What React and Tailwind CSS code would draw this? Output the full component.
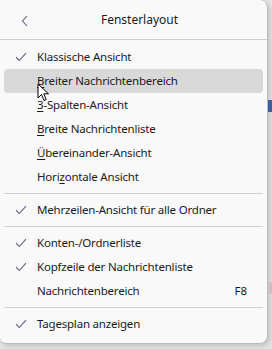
import React from "react";

const Check = () => (
  <svg width="12" height="10" viewBox="0 0 12 10" className="shrink-0">
    <path d="M1 5.2 L4.2 8.5 L11 1.2" fill="none" stroke="#5f5d86" strokeWidth="1.1" />
  </svg>
);

const Item = ({ checked, label, u, shortcut, active }) => {
  // u = index of the underlined access-key letter
  let text = label;
  if (u !== undefined) {
    text = (
      <>
        {label.slice(0, u)}
        <span className="underline underline-offset-2">{label[u]}</span>
        {label.slice(u + 1)}
      </>
    );
  }
  return (
    <div
      className={
        "mx-1 h-6 flex items-center rounded-[4px] pr-3 " +
        (active ? "bg-[#d9d9d9]" : "")
      }
    >
      <div className="w-[33px] pl-[11px] flex items-center">{checked && <Check />}</div>
      <span className="flex-1 whitespace-nowrap tracking-[-0.2px]">{text}</span>
      {shortcut && <span className="pr-[4px]">{shortcut}</span>}
    </div>
  );
};

const Divider = () => (
  <div className="h-[9px] flex items-center px-1">
    <div className="h-px w-full bg-[#d0d0d0]" />
  </div>
);

export default function App() {
  return (
    <div className="relative w-[272px] h-[349px] bg-[#e4e4e4] overflow-hidden flex">
      <div className="w-[268px] h-[344px] bg-[#f9f9f9] rounded-r-[8px] rounded-bl-[6px] border-r border-b border-[#bdbdbd] shadow-[2px_2px_4px_rgba(0,0,0,0.15)] text-[11.5px] text-[#1b1b1b] font-['Noto_Sans',sans-serif] flex flex-col">
        <div className="h-[40px] flex items-center relative border-b border-[#cfcfcf]">
          <svg width="8" height="12" viewBox="0 0 8 12" className="absolute left-[21px] top-[15px]">
            <path d="M6 1 L1.5 6 L6 11" fill="none" stroke="#5f5d86" strokeWidth="1.1" />
          </svg>
          <div className="flex-1 text-center pl-[12px] text-[12px]">Fensterlayout</div>
        </div>
        <div className="pt-[5px] flex flex-col">
          <Item checked label="Klassische Ansicht" />
          <Item active label="Breiter Nachrichtenbereich" u={0} />
          <Item label="3-Spalten-Ansicht" u={0} />
          <Item label="Breite Nachrichtenliste" u={0} />
          <Item label="Übereinander-Ansicht" u={0} />
          <Item label="Horizontale Ansicht" u={4} />
          <Divider />
          <Item checked label="Mehrzeilen-Ansicht für alle Ordner" />
          <Divider />
          <Item checked label="Konten-/Ordnerliste" />
          <Item checked label="Kopfzeile der Nachrichtenliste" />
          <Item label="Nachrichtenbereich" shortcut="F8" />
          <Divider />
          <Item checked label="Tagesplan anzeigen" />
        </div>
      </div>
      <div className="flex-1 flex flex-col">
        <div className="h-[100px]" />
        <div className="h-[12px] bg-[#3b5f9a]" />
        <div className="h-[170px]" />
        <div className="h-[12px] bg-[#c9c2c6]" />
      </div>
      <svg width="14" height="20" viewBox="0 0 14 20" className="absolute left-[37px] top-[83px]">
        <path d="M1 1 L1 15 L4.5 11.5 L7 17.5 L9.2 16.5 L6.8 10.8 L11.5 10.8 Z" fill="#fff" stroke="#000" strokeWidth="1" strokeLinejoin="round" />
      </svg>
    </div>
  );
}
